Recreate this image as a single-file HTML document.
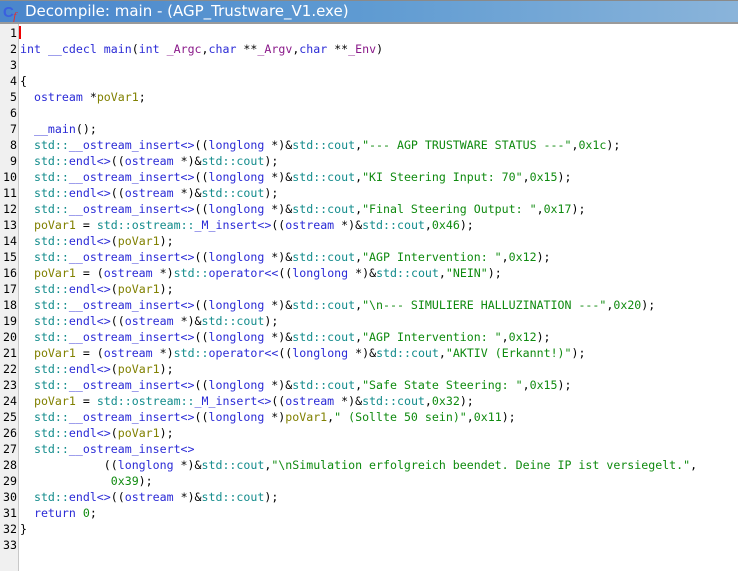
<!DOCTYPE html>
<html><head><meta charset="utf-8"><style>
html,body{margin:0;padding:0;background:#fff;width:738px;height:571px;overflow:hidden}
#title{position:absolute;left:0;top:0;width:738px;height:24px;border-top:1px solid #8a8a8a;border-bottom:2px solid #9a9a9a;box-sizing:border-box;background:linear-gradient(to right,#4a86cc 0%,#5f9bd2 50%,#8ab4da 100%);}
#title .t{position:absolute;left:25px;top:1px;font:15px "DejaVu Sans","Liberation Sans",sans-serif;color:#fff;white-space:pre}
#gut{position:absolute;left:0;top:24px;width:18px;height:547px;background:#f0f0f0;border-right:1px solid #c8c8c8}
#code,#nums{position:absolute;top:25px;font-family:"DejaVu Sans Mono",monospace;font-size:11.6px;line-height:16px;white-space:pre;color:#000}
#nums{left:0;width:17px;text-align:right}
#code{left:20px}
.k{color:#2b2bd6}.f{color:#2b2bd6}.s{color:#138c8c}.v{color:#808000}.g{color:#0f8a0f}.p{color:#8a1a8a}
#cur{position:absolute;left:19px;top:26px;width:2px;height:13px;background:#e00}
</style></head><body>
<div id="title"><svg width="20" height="20" style="position:absolute;left:3px;top:1px" viewBox="0 0 20 20"><text x="0" y="15" font-family="Liberation Sans" font-weight="bold" font-size="15" fill="#3a5fe0">C</text><text x="10" y="18" font-family="Liberation Serif" font-style="italic" font-size="12" fill="#e03030">f</text></svg><span class="t">Decompile: main - (AGP_Trustware_V1.exe)</span></div>
<div id="gut"></div>
<div id="nums">1
2
3
4
5
6
7
8
9
10
11
12
13
14
15
16
17
18
19
20
21
22
23
24
25
26
27
28
29
30
31
32
33</div>
<div id="cur"></div>
<div id="code">
<span class="k">int</span> <span class="f">__cdecl</span> <span class="f">main</span>(<span class="k">int</span> <span class="p">_Argc</span>,<span class="k">char</span> **<span class="p">_Argv</span>,<span class="k">char</span> **<span class="p">_Env</span>)

{
  <span class="k">ostream</span> *<span class="v">poVar1</span>;
  
  <span class="f">__main</span>();
  <span class="s">std::</span><span class="f">__ostream_insert&lt;&gt;</span>((<span class="k">longlong</span> *)&amp;<span class="s">std::cout</span>,<span class="g">"--- AGP TRUSTWARE STATUS ---"</span>,<span class="g">0x1c</span>);
  <span class="s">std::</span><span class="f">endl&lt;&gt;</span>((<span class="k">ostream</span> *)&amp;<span class="s">std::cout</span>);
  <span class="s">std::</span><span class="f">__ostream_insert&lt;&gt;</span>((<span class="k">longlong</span> *)&amp;<span class="s">std::cout</span>,<span class="g">"KI Steering Input: 70"</span>,<span class="g">0x15</span>);
  <span class="s">std::</span><span class="f">endl&lt;&gt;</span>((<span class="k">ostream</span> *)&amp;<span class="s">std::cout</span>);
  <span class="s">std::</span><span class="f">__ostream_insert&lt;&gt;</span>((<span class="k">longlong</span> *)&amp;<span class="s">std::cout</span>,<span class="g">"Final Steering Output: "</span>,<span class="g">0x17</span>);
  <span class="v">poVar1</span> = <span class="s">std::ostream::</span><span class="f">_M_insert&lt;&gt;</span>((<span class="k">ostream</span> *)&amp;<span class="s">std::cout</span>,<span class="g">0x46</span>);
  <span class="s">std::</span><span class="f">endl&lt;&gt;</span>(<span class="v">poVar1</span>);
  <span class="s">std::</span><span class="f">__ostream_insert&lt;&gt;</span>((<span class="k">longlong</span> *)&amp;<span class="s">std::cout</span>,<span class="g">"AGP Intervention: "</span>,<span class="g">0x12</span>);
  <span class="v">poVar1</span> = (<span class="k">ostream</span> *)<span class="s">std::</span><span class="f">operator&lt;&lt;</span>((<span class="k">longlong</span> *)&amp;<span class="s">std::cout</span>,<span class="g">"NEIN"</span>);
  <span class="s">std::</span><span class="f">endl&lt;&gt;</span>(<span class="v">poVar1</span>);
  <span class="s">std::</span><span class="f">__ostream_insert&lt;&gt;</span>((<span class="k">longlong</span> *)&amp;<span class="s">std::cout</span>,<span class="g">"\n--- SIMULIERE HALLUZINATION ---"</span>,<span class="g">0x20</span>);
  <span class="s">std::</span><span class="f">endl&lt;&gt;</span>((<span class="k">ostream</span> *)&amp;<span class="s">std::cout</span>);
  <span class="s">std::</span><span class="f">__ostream_insert&lt;&gt;</span>((<span class="k">longlong</span> *)&amp;<span class="s">std::cout</span>,<span class="g">"AGP Intervention: "</span>,<span class="g">0x12</span>);
  <span class="v">poVar1</span> = (<span class="k">ostream</span> *)<span class="s">std::</span><span class="f">operator&lt;&lt;</span>((<span class="k">longlong</span> *)&amp;<span class="s">std::cout</span>,<span class="g">"AKTIV (Erkannt!)"</span>);
  <span class="s">std::</span><span class="f">endl&lt;&gt;</span>(<span class="v">poVar1</span>);
  <span class="s">std::</span><span class="f">__ostream_insert&lt;&gt;</span>((<span class="k">longlong</span> *)&amp;<span class="s">std::cout</span>,<span class="g">"Safe State Steering: "</span>,<span class="g">0x15</span>);
  <span class="v">poVar1</span> = <span class="s">std::ostream::</span><span class="f">_M_insert&lt;&gt;</span>((<span class="k">ostream</span> *)&amp;<span class="s">std::cout</span>,<span class="g">0x32</span>);
  <span class="s">std::</span><span class="f">__ostream_insert&lt;&gt;</span>((<span class="k">longlong</span> *)<span class="v">poVar1</span>,<span class="g">" (Sollte 50 sein)"</span>,<span class="g">0x11</span>);
  <span class="s">std::</span><span class="f">endl&lt;&gt;</span>(<span class="v">poVar1</span>);
  <span class="s">std::</span><span class="f">__ostream_insert&lt;&gt;</span>
            ((<span class="k">longlong</span> *)&amp;<span class="s">std::cout</span>,<span class="g">"\nSimulation erfolgreich beendet. Deine IP ist versiegelt."</span>,
             <span class="g">0x39</span>);
  <span class="s">std::</span><span class="f">endl&lt;&gt;</span>((<span class="k">ostream</span> *)&amp;<span class="s">std::cout</span>);
  <span class="k">return</span> <span class="g">0</span>;
}
</div>
</body></html>
